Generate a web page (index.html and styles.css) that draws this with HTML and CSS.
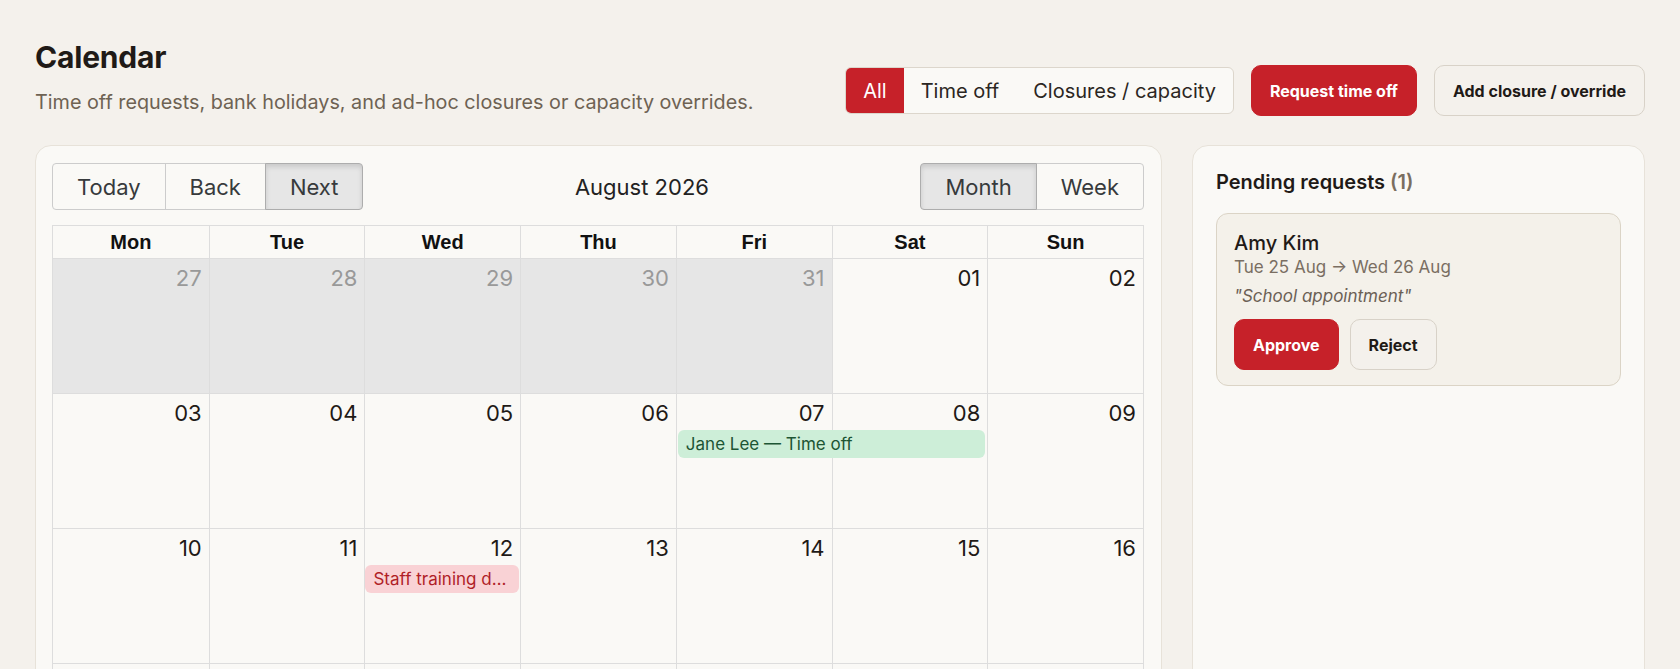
FILE: index.html
```html
<!DOCTYPE html>
<html lang="en">

<head>
    <meta charset="UTF-8">
    <meta name="viewport" content="width=device-width, initial-scale=1.0">
    <title>Calendar</title>
    <link rel="stylesheet" href="styles.css">
</head>

<body>
    <div class="page">
        <header class="page-head">
            <div class="page-title">
                <h1>Calendar</h1>
                <p class="page-sub">Time off requests, bank holidays, and ad-hoc closures or capacity overrides.</p>
            </div>
            <div class="actions">
                <div class="seg">
                    <button class="seg-btn is-active">All</button>
                    <button class="seg-btn">Time off</button>
                    <button class="seg-btn">Closures / capacity</button>
                </div>
                <button class="btn btn-primary">Request time off</button>
                <button class="btn btn-light">Add closure / override</button>
            </div>
        </header>

        <main class="layout">
            <section class="card cal-card">
                <div class="toolbar">
                    <div class="btn-group">
                        <button>Today</button>
                        <button>Back</button>
                        <button class="is-active">Next</button>
                    </div>
                    <span class="toolbar-label">August 2026</span>
                    <div class="btn-group">
                        <button class="is-active">Month</button>
                        <button>Week</button>
                    </div>
                </div>

                <div class="month">
                    <div class="month-head">
                        <div>Mon</div>
                        <div>Tue</div>
                        <div>Wed</div>
                        <div>Thu</div>
                        <div>Fri</div>
                        <div>Sat</div>
                        <div>Sun</div>
                    </div>

                    <div class="week">
                        <div class="day off"><span>27</span></div>
                        <div class="day off"><span>28</span></div>
                        <div class="day off"><span>29</span></div>
                        <div class="day off"><span>30</span></div>
                        <div class="day off"><span>31</span></div>
                        <div class="day"><span>01</span></div>
                        <div class="day"><span>02</span></div>
                    </div>

                    <div class="week">
                        <div class="day"><span>03</span></div>
                        <div class="day"><span>04</span></div>
                        <div class="day"><span>05</span></div>
                        <div class="day"><span>06</span></div>
                        <div class="day"><span>07</span></div>
                        <div class="day"><span>08</span></div>
                        <div class="day"><span>09</span></div>
                        <div class="event event-timeoff" style="grid-column: 5 / span 2;">Jane Lee — Time off</div>
                    </div>

                    <div class="week">
                        <div class="day"><span>10</span></div>
                        <div class="day"><span>11</span></div>
                        <div class="day"><span>12</span></div>
                        <div class="day"><span>13</span></div>
                        <div class="day"><span>14</span></div>
                        <div class="day"><span>15</span></div>
                        <div class="day"><span>16</span></div>
                        <div class="event event-closure" style="grid-column: 3 / span 1;">Staff training day — closed</div>
                    </div>

                    <div class="week">
                        <div class="day"><span>17</span></div>
                        <div class="day"><span>18</span></div>
                        <div class="day"><span>19</span></div>
                        <div class="day"><span>20</span></div>
                        <div class="day"><span>21</span></div>
                        <div class="day"><span>22</span></div>
                        <div class="day"><span>23</span></div>
                    </div>

                    <div class="week">
                        <div class="day"><span>24</span></div>
                        <div class="day"><span>25</span></div>
                        <div class="day"><span>26</span></div>
                        <div class="day"><span>27</span></div>
                        <div class="day"><span>28</span></div>
                        <div class="day"><span>29</span></div>
                        <div class="day"><span>30</span></div>
                    </div>
                </div>
            </section>

            <aside class="card pending">
                <h2 class="pending-title">Pending requests <span class="count">(1)</span></h2>

                <div class="request">
                    <div class="request-name">Amy Kim</div>
                    <div class="request-dates">Tue 25 Aug → Wed 26 Aug</div>
                    <div class="request-note">"School appointment"</div>
                    <div class="request-actions">
                        <button class="btn btn-primary btn-tall">Approve</button>
                        <button class="btn btn-light btn-tall">Reject</button>
                    </div>
                </div>
            </aside>
        </main>
    </div>
</body>

</html>
```

FILE: styles.css
```css
html {
    background-color: #f4f1ec;
    overflow: hidden;
}

body {
    margin: 0;
    font-family: Inter, "Noto Sans", sans-serif;
    color: #1f1a17;
}

button {
    font-family: inherit;
    cursor: pointer;
}

.page {
    padding: 39px 35px 0 35px;
}

/* header */

.page-head {
    display: flex;
    justify-content: space-between;
    align-items: flex-end;
}

.page-title h1 {
    margin: 0;
    font-size: 30px;
    line-height: 36px;
    font-weight: 700;
    letter-spacing: -0.2px;
}

.page-sub {
    margin: 13px 0 0 0;
    font-size: 19.8px;
    line-height: 28px;
    color: #6e6253;
}

.actions {
    display: flex;
    align-items: center;
    gap: 17px;
}

.seg {
    display: flex;
    height: 47px;
    box-sizing: border-box;
    border: 1px solid #dcd6cc;
    border-radius: 6px;
    background: #faf9f6;
    overflow: hidden;
}

.seg-btn {
    border: none;
    background: transparent;
    padding: 0 17px;
    font-size: 20px;
    color: #2b2622;
}

.seg-btn.is-active {
    background: #c62129;
    color: #fff;
}

.btn {
    height: 51px;
    box-sizing: border-box;
    padding: 0 18px;
    border-radius: 10px;
    font-size: 16px;
    font-weight: 700;
}

.btn-primary {
    background: #c62129;
    color: #fff;
    border: 1px solid #c62129;
}

.btn-light {
    background: #f4f1ec;
    color: #1f1a17;
    border: 1px solid #d8d2c8;
}

/* layout */

.layout {
    display: grid;
    grid-template-columns: 1fr 453px;
    gap: 30px;
    margin-top: 29px;
}

.card {
    background: #faf9f6;
    border: 1px solid #e7e2d9;
    border-radius: 16px;
    box-sizing: border-box;
}

.cal-card {
    padding: 17px 17px 24px 16px;
}

/* toolbar */

.toolbar {
    display: flex;
    align-items: center;
    margin-bottom: 15px;
}

.toolbar-label {
    flex-grow: 1;
    text-align: center;
    font-size: 22px;
    color: #222;
}

.btn-group {
    display: flex;
}

.btn-group button {
    height: 47px;
    padding: 0 24px;
    font-size: 22px;
    color: #373a3c;
    background: transparent;
    border: 1px solid #ccc;
    margin-left: -1px;
}

.btn-group button:first-child {
    margin-left: 0;
    border-radius: 4px 0 0 4px;
}

.btn-group button:last-child {
    border-radius: 0 4px 4px 0;
}

.btn-group button.is-active {
    background: #e6e6e6;
    border-color: #adadad;
    box-shadow: inset 0 3px 5px rgba(0, 0, 0, 0.125);
    position: relative;
}

/* month grid */

.month {
    border: 1px solid #ddd;
}

.month-head {
    display: grid;
    grid-template-columns: repeat(7, 1fr);
    border-bottom: 1px solid #ddd;
}

.month-head > div {
    height: 32px;
    line-height: 32px;
    text-align: center;
    font-family: "Liberation Sans", Arial, sans-serif;
    font-weight: 700;
    font-size: 20px;
    color: #111;
    border-left: 1px solid #ddd;
}

.month-head > div:first-child {
    border-left: none;
}

.week {
    display: grid;
    grid-template-columns: repeat(7, 1fr);
    grid-template-rows: 35px 29px 1fr;
    height: 135px;
    box-sizing: border-box;
    border-top: 1px solid #ddd;
}

.month-head + .week {
    border-top: none;
    height: 134px;
}

.day {
    grid-row: 1 / -1;
    border-left: 1px solid #ddd;
    text-align: right;
    padding: 2px 7px 0 7px;
    font-size: 22px;
    line-height: 34px;
    color: #1f1a17;
}

.day:nth-child(1) { grid-column: 1; border-left: none; }
.day:nth-child(2) { grid-column: 2; }
.day:nth-child(3) { grid-column: 3; }
.day:nth-child(4) { grid-column: 4; }
.day:nth-child(5) { grid-column: 5; }
.day:nth-child(6) { grid-column: 6; }
.day:nth-child(7) { grid-column: 7; }

.day.off {
    background: #e6e6e6;
    color: #999;
}

.event {
    grid-row: 2;
    margin: 1px 2px 0 2px;
    padding: 0 8px;
    border-radius: 6px;
    font-size: 17px;
    line-height: 29px;
    white-space: nowrap;
    overflow: hidden;
    text-overflow: ellipsis;
    min-width: 0;
}

.event-timeoff {
    background: #cdeed8;
    color: #1d5534;
}

.event-closure {
    background: #f9d2d5;
    color: #b01e27;
    margin-left: 1px;
    margin-right: 1px;
}

/* pending */

.pending {
    padding: 23px 23px;
}

.pending-title {
    margin: 0;
    font-size: 20px;
    line-height: 27px;
    font-weight: 600;
}

.count {
    color: #7a6e60;
}

.request {
    margin-top: 17px;
    padding: 17px 18px 15px 17px;
    border: 1px solid #dbd4c6;
    border-radius: 12px;
    background: #f4f1ea;
}

.request-name {
    font-size: 20px;
    line-height: 25px;
    font-weight: 500;
}

.request-dates {
    font-size: 17px;
    line-height: 23px;
    color: #7a6e62;
}

.request-note {
    margin-top: 6px;
    font-size: 17px;
    line-height: 23px;
    font-style: italic;
    color: #6b6055;
}

.request-actions {
    display: flex;
    gap: 11px;
    margin-top: 11px;
}

.btn-tall {
    padding: 0 18px;
}
```
